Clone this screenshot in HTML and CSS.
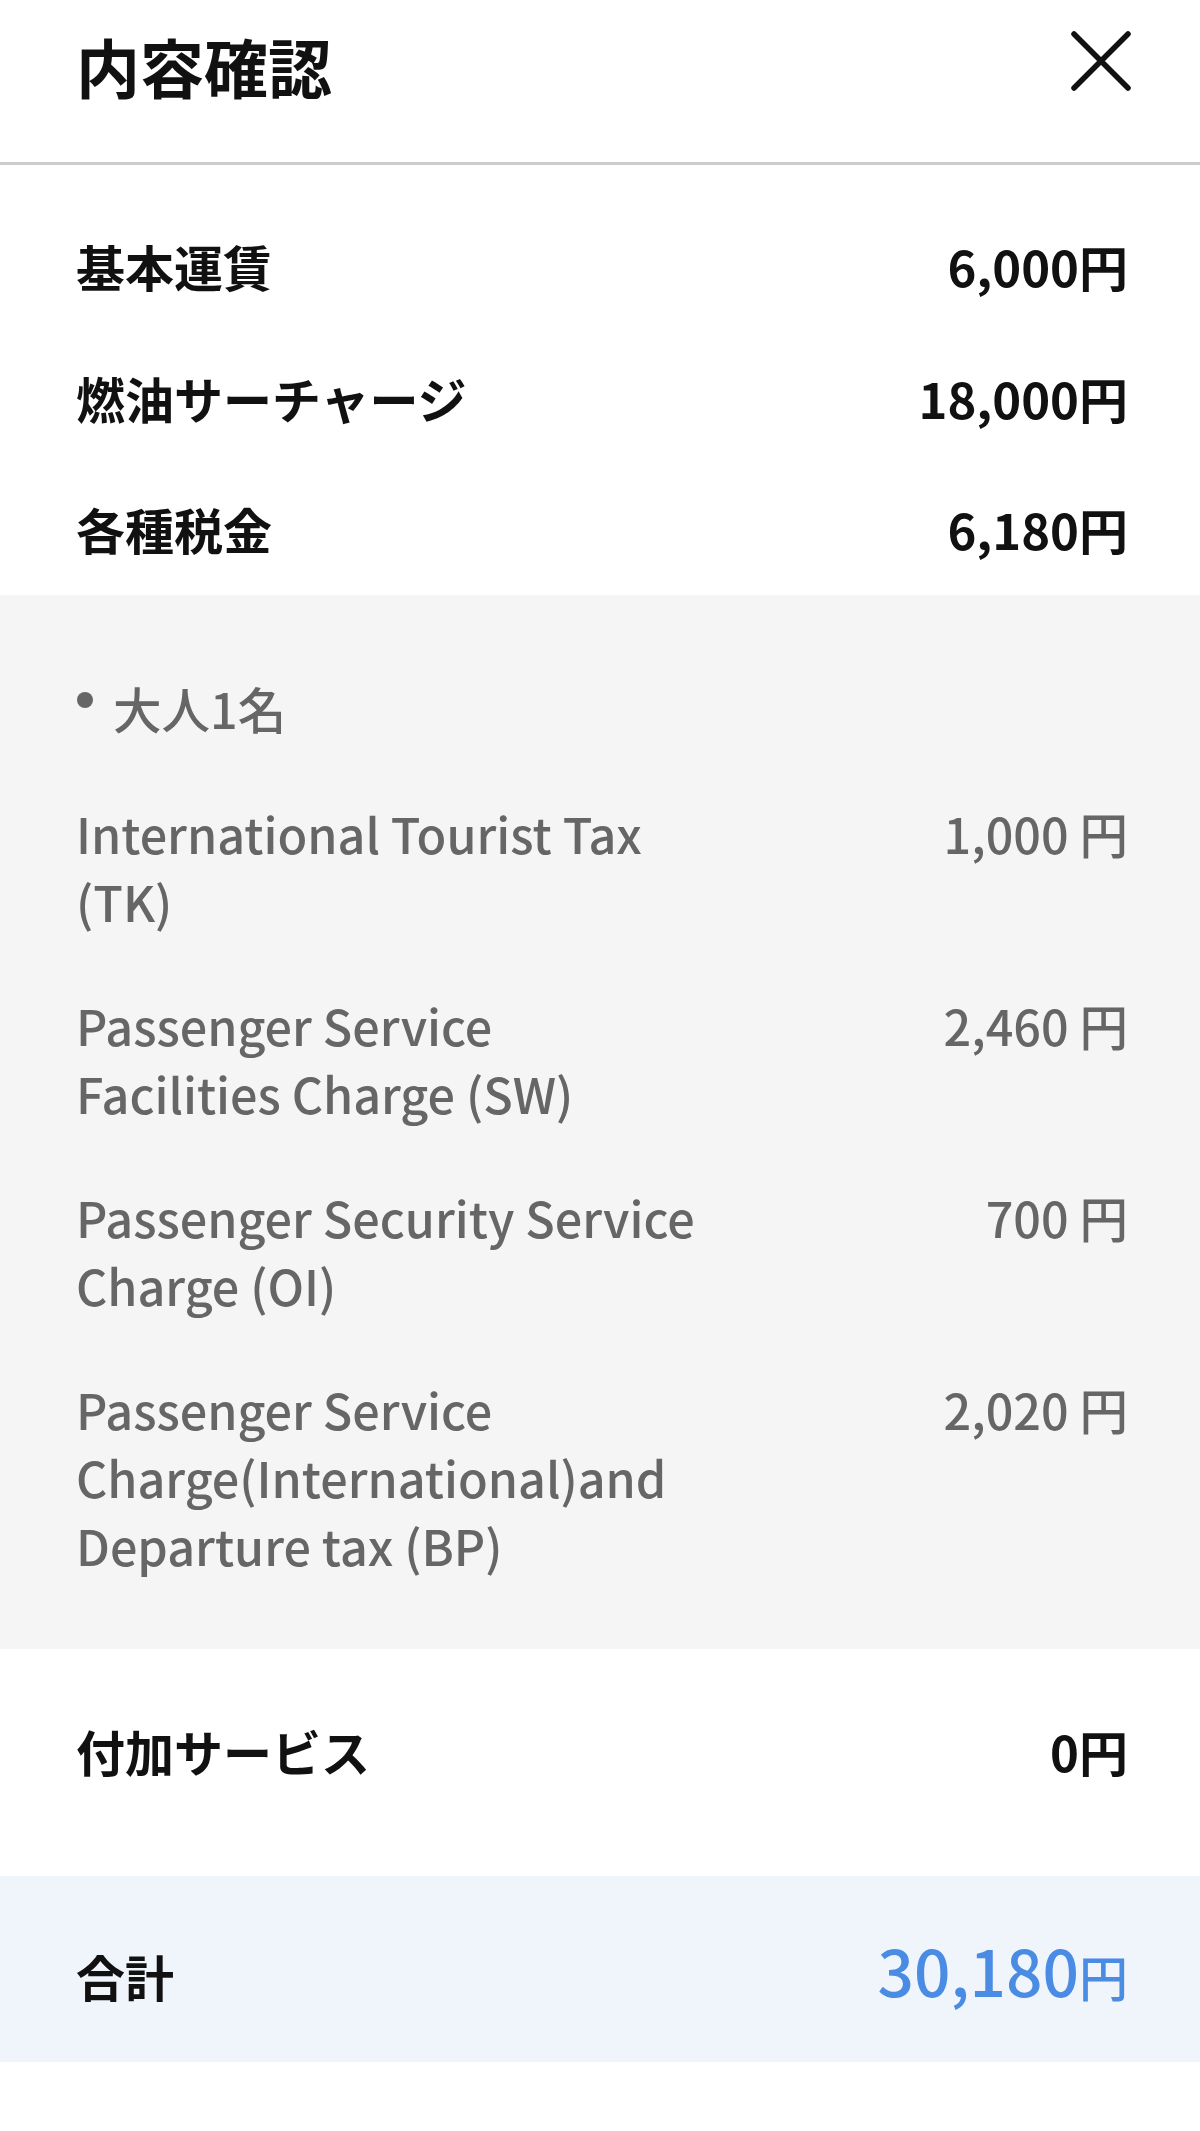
FILE: index.html
```html
<!DOCTYPE html>
<html lang="ja">
<head>
    <meta charset="UTF-8">
    <meta name="viewport" content="width=device-width, initial-scale=1.0">
    <title>内容確認</title>
    <link rel="stylesheet" href="styles.css">
</head>
<body>

    <div class="header">
        <h1 class="title">内容確認</h1>
        <button class="close" aria-label="閉じる">
            <svg viewBox="0 0 62 62" width="62" height="62">
                <path d="M4 4 L58 58 M58 4 L4 58" stroke="#111" stroke-width="5.5" stroke-linecap="round" fill="none"/>
            </svg>
        </button>
    </div>

    <div class="summary">
        <div class="row">
            <span class="label">基本運賃</span>
            <span class="value">6,000円</span>
        </div>
        <div class="row">
            <span class="label">燃油サーチャージ</span>
            <span class="value">18,000円</span>
        </div>
        <div class="row">
            <span class="label">各種税金</span>
            <span class="value">6,180円</span>
        </div>
    </div>

    <div class="taxes">
        <div class="pax">大人1名</div>
        <div class="tax-row">
            <span class="tax-name">International Tourist Tax (TK)</span>
            <span class="tax-value">1,000 円</span>
        </div>
        <div class="tax-row">
            <span class="tax-name">Passenger Service Facilities Charge (SW)</span>
            <span class="tax-value">2,460 円</span>
        </div>
        <div class="tax-row">
            <span class="tax-name">Passenger Security Service Charge (OI)</span>
            <span class="tax-value">700 円</span>
        </div>
        <div class="tax-row">
            <span class="tax-name">Passenger Service Charge(International)and Departure tax (BP)</span>
            <span class="tax-value">2,020 円</span>
        </div>
    </div>

    <div class="extras">
        <div class="row">
            <span class="label">付加サービス</span>
            <span class="value">0円</span>
        </div>
    </div>

    <div class="total">
        <span class="label">合計</span>
        <span class="total-value">30,180<small>円</small></span>
    </div>

</body>
</html>
```

FILE: styles.css
```css
body {
    margin: 0;
    padding: 0;
    background-color: #ffffff;
    font-family: "Noto Sans CJK JP", "Noto Sans", sans-serif;
    color: #111111;
}

.header {
    display: flex;
    justify-content: space-between;
    align-items: flex-start;
    height: 165px;
    padding: 0 68px 0 76px;
    border-bottom: 3px solid #cccccc;
    box-sizing: border-box;
}

.title {
    margin: 0;
    padding-top: 21px;
    font-size: 64px;
    line-height: 88px;
    font-weight: 700;
}

.close {
    margin-top: 30px;
    padding: 0;
    width: 62px;
    height: 62px;
    border: none;
    background: none;
    cursor: pointer;
}

.close svg {
    display: block;
}

.summary {
    padding: 34px 72px 1px 76px;
}

.row {
    display: flex;
    justify-content: space-between;
    align-items: center;
    height: 132px;
    font-size: 49px;
    font-weight: 700;
}

.summary .row:last-child {
    height: 131px;
}

.taxes {
    background-color: #f5f5f5;
    padding: 79px 72px 70px 76px;
    color: #666666;
    font-size: 48.5px;
    font-weight: 500;
    line-height: 68px;
}

.pax {
    position: relative;
    padding-left: 37px;
    margin-bottom: 57px;
}

.pax::before {
    content: "";
    position: absolute;
    left: 1px;
    top: 18px;
    width: 16px;
    height: 16px;
    border-radius: 50%;
    background-color: #666666;
}

.tax-row {
    display: flex;
    justify-content: space-between;
    align-items: flex-start;
    margin-bottom: 56px;
}

.tax-row:last-child {
    margin-bottom: 0;
}

.tax-name {
    flex: 0 1 626px;
}

.tax-value {
    white-space: nowrap;
}

.extras {
    padding: 35px 72px 60px 76px;
}

.total {
    display: flex;
    justify-content: space-between;
    align-items: baseline;
    height: 186px;
    padding: 0 72px 0 76px;
    box-sizing: border-box;
    background-color: #f0f4fb;
    font-size: 49px;
    font-weight: 700;
    line-height: 186px;
}

.total-value {
    color: #4a8be3;
    font-size: 64px;
    font-weight: 500;
}

.total-value small {
    font-size: 49px;
}
```
